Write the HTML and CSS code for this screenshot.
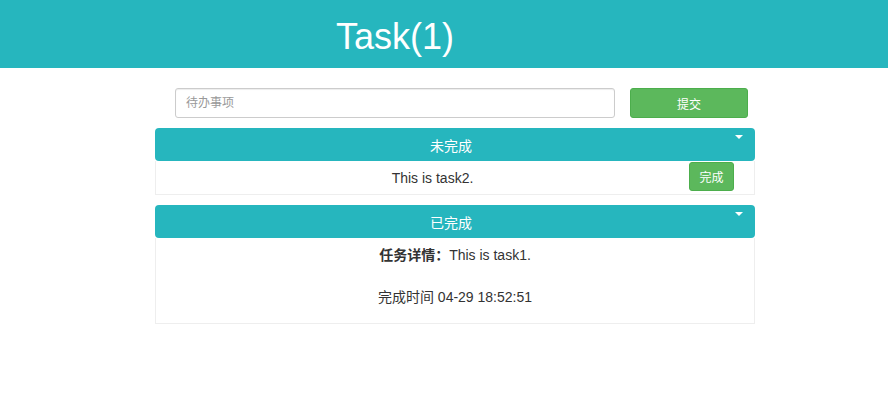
FILE: index.html
```html
<!DOCTYPE html>
<html lang="zh">
<head>
<meta charset="utf-8">
<title>Task</title>
<link rel="stylesheet" href="styles.css">
</head>
<body>
<header class="topbar">
  <h1 class="title">Task(1)</h1>
</header>
<main class="wrap">
  <form class="add-row">
    <input class="add-input" type="text" placeholder="待办事项">
    <button class="btn btn-submit" type="button">提交</button>
  </form>

  <section class="panel">
    <div class="panel-head">
      <span class="panel-title">未完成</span>
      <span class="caret"></span>
    </div>
    <div class="panel-body todo-row">
      <span class="todo-text">This is task2.</span>
      <button class="btn btn-done" type="button">完成</button>
    </div>
  </section>

  <section class="panel">
    <div class="panel-head">
      <span class="panel-title">已完成</span>
      <span class="caret"></span>
    </div>
    <div class="panel-body done-body">
      <p class="done-line"><strong>任务详情：</strong>This is task1.</p>
      <p class="done-line done-time">完成时间 04-29 18:52:51</p>
    </div>
  </section>
</main>
</body>
</html>
```

FILE: styles.css
```css
* {
  box-sizing: border-box;
}

body {
  margin: 0;
  font-family: "Liberation Sans", Arial, "Noto Sans CJK SC", sans-serif;
  font-size: 14px;
  color: #333;
  background: #fff;
}

.topbar {
  height: 68px;
  background: #26b6be;
  padding-top: 5px;
  padding-left: 336px;
}

.title {
  margin: 0;
  font-size: 36px;
  font-weight: normal;
  line-height: 63px;
  color: #fff;
}

.wrap {
  width: 600px;
  margin-left: 155px;
  padding-top: 20px;
}

.add-row {
  display: flex;
  align-items: center;
  height: 30px;
  margin: 0 0 10px 20px;
}

.add-input {
  width: 440px;
  height: 30px;
  border: 1px solid #ccc;
  border-radius: 3px;
  padding: 0 10px;
  font-family: inherit;
  font-size: 12px;
  color: #333;
  outline: none;
  box-shadow: inset 0 1px 1px rgba(0, 0, 0, 0.075);
}

.add-input::placeholder {
  color: #999;
}

.btn {
  font-family: inherit;
  font-size: 12px;
  color: #fff;
  background: #5cb85c;
  border: 1px solid #4cae4c;
  border-radius: 3px;
  padding: 0;
  cursor: pointer;
}

.btn-submit {
  width: 118px;
  height: 30px;
  margin-left: 15px;
}

.panel {
  margin-bottom: 10px;
}

.panel-head {
  position: relative;
  height: 33px;
  background: #26b6be;
  border-radius: 4px;
  display: flex;
  align-items: center;
  justify-content: center;
  padding-right: 8px;
  color: #fff;
  font-size: 14px;
}

.caret {
  position: absolute;
  right: 12px;
  top: 7px;
  width: 0;
  height: 0;
  border-top: 4px solid #fff;
  border-left: 4px solid transparent;
  border-right: 4px solid transparent;
}

.panel-body {
  border: 1px solid #eee;
  border-top: 0;
}

.todo-row {
  height: 34px;
  display: flex;
  align-items: center;
  padding-right: 20px;
}

.todo-text {
  flex: 1;
  text-align: center;
  margin-right: -20px;
  padding-top: 1px;
}

.btn-done {
  width: 45px;
  height: 29px;
  margin-top: -3px;
}

.done-body {
  height: 86px;
  padding-top: 7px;
  text-align: center;
}

.done-line {
  margin: 0;
  line-height: 20px;
}

.done-time {
  margin-top: 22px;
}
```
